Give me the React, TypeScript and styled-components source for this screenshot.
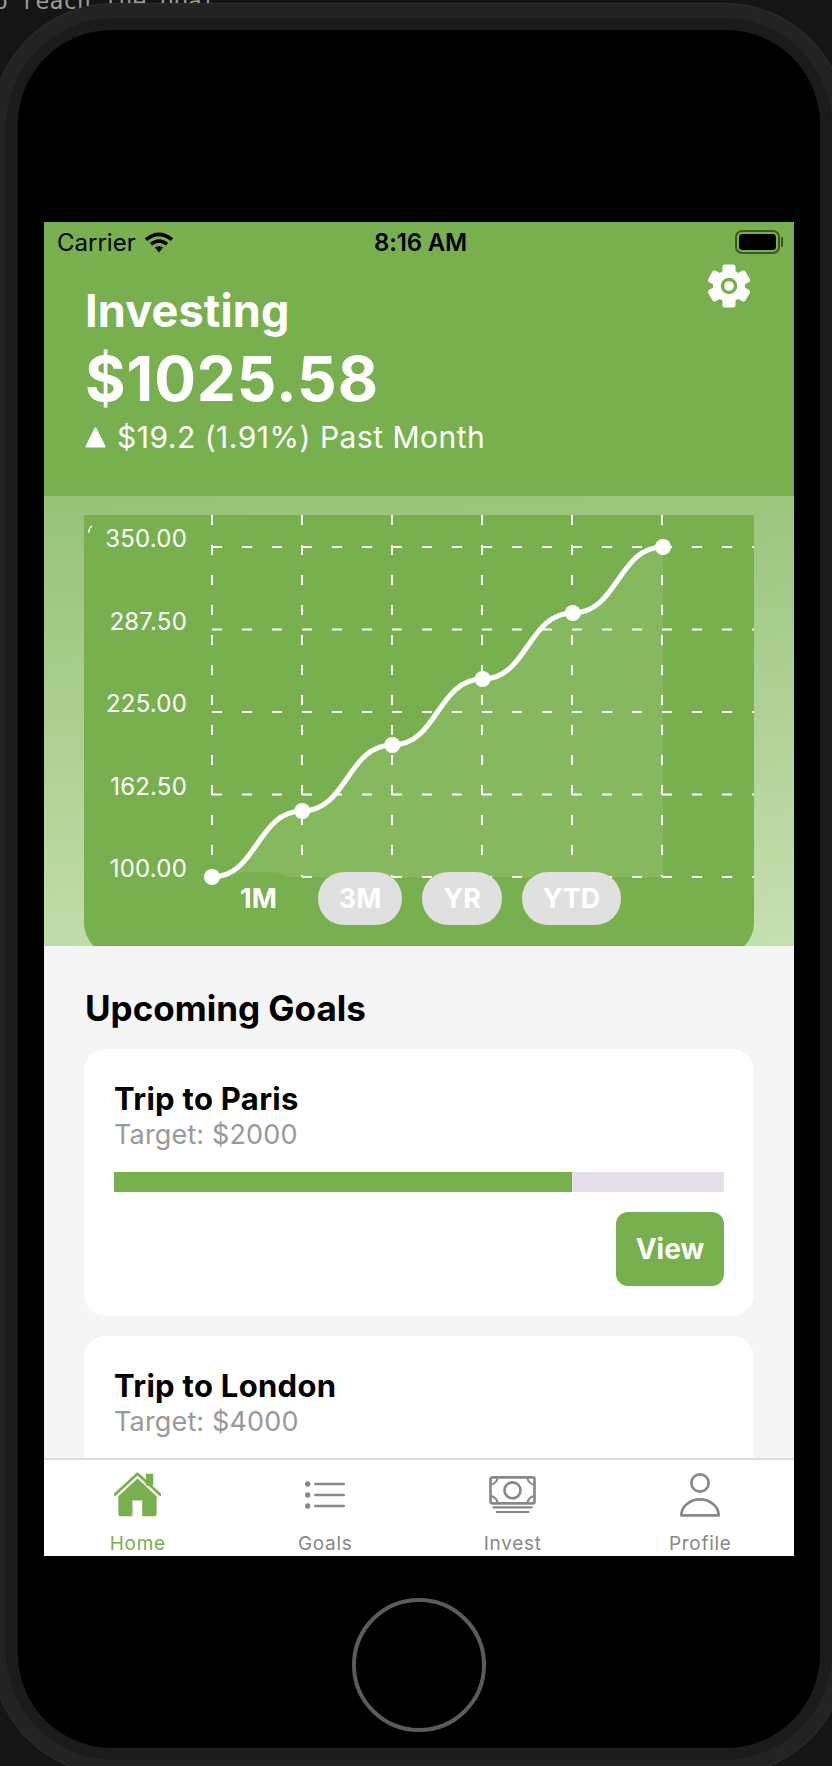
import React from "react";
import styled, { createGlobalStyle } from "styled-components";

const GREEN = "#79b04f";
const SANS = `Inter, "Noto Sans", "Liberation Sans", sans-serif`;

const GlobalStyle = createGlobalStyle`
  html, body {
    margin: 0;
    padding: 0;
    background: #151515;
  }
`;

const Desktop = styled.div`
  position: relative;
  width: 832px;
  height: 1766px;
  overflow: hidden;
  background: #151515;
  font-family: ${SANS};
`;

const TerminalLine = styled.div`
  position: absolute;
  top: -12px;
  left: -6px;
  font: 23px/26px "DejaVu Sans Mono", monospace;
  color: #9c9c9c;
  white-space: pre;
`;

const PhoneShell = styled.div`
  position: relative;
  width: 826px;
  margin: 4px 0 0 -8px;
  padding: 14px;
  background: #232323;
  border-radius: 122px;
  box-shadow: 0 0 0 1px #2e2e2e;
`;

const PhoneBezel = styled.div`
  padding: 12px;
  background: #1b1b1b;
  border-radius: 108px;
`;

const PhoneFace = styled.div`
  display: flex;
  flex-direction: column;
  align-items: center;
  padding: 192px 26px 16px;
  background: #000;
  border-radius: 94px;
`;

const HomeButton = styled.div`
  box-sizing: border-box;
  width: 134px;
  height: 134px;
  margin-top: 42px;
  border: 4px solid #5b5b5b;
  border-radius: 50%;
`;

const Screen = styled.div`
  display: flex;
  flex-direction: column;
  width: 750px;
  height: 1334px;
  overflow: hidden;
  background: #f5f5f5;
`;

const Header = styled.header`
  flex: none;
  height: 274px;
  background: ${GREEN};
`;

const StatusBar = styled.div`
  display: grid;
  grid-template-columns: 1fr auto 1fr;
  align-items: center;
  height: 40px;
  padding: 0 10px 0 13px;
  font-size: 24px;
  color: #000;
`;

const StatusLeft = styled.div`
  display: flex;
  align-items: center;
  gap: 8px;
`;

const StatusTime = styled.div`
  font-weight: 600;
  letter-spacing: -0.2px;
`;

const StatusRight = styled.div`
  display: flex;
  justify-content: flex-end;
`;

const Summary = styled.div`
  display: flex;
  justify-content: space-between;
  align-items: flex-start;
  padding: 22px 40px 0 41px;
`;

const Title = styled.div`
  font-size: 45px;
  line-height: 54px;
  font-weight: 700;
  letter-spacing: 0.15px;
  color: #fff;
`;

const Amount = styled.div`
  margin-top: 4px;
  font-size: 62px;
  line-height: 74px;
  font-weight: 700;
  letter-spacing: 0.9px;
  color: #fff;
`;

const Change = styled.div`
  display: flex;
  align-items: center;
  gap: 11px;
  margin-top: 3px;
  font-size: 30px;
  line-height: 36px;
  letter-spacing: 0.5px;
  color: #fff;
`;

const SettingsIcon = styled.svg`
  width: 44px;
  height: 44px;
  margin: -20px 3px 0 0;
`;

const ChartSection = styled.section`
  flex: none;
  height: 450px;
  box-sizing: border-box;
  padding: 19px 40px 0;
  overflow: hidden;
  background: linear-gradient(176deg, #97c277 0%, #c6dfb1 100%);
`;

const ChartCard = styled.div`
  position: relative;
  height: 440px;
  background: ${GREEN};
  border-radius: 0 0 32px 32px;
`;

const ChartSvg = styled.svg`
  display: block;
  width: 670px;
  height: 440px;
`;

const AxisLabel = styled.text`
  font-family: ${SANS};
  font-size: 24px;
  letter-spacing: 0.2px;
  fill: #fff;
  text-anchor: end;
`;

const RangeRow = styled.div`
  position: absolute;
  top: 357px;
  left: 135px;
  display: flex;
  gap: 20px;
`;

const RangePill = styled.div<{ $active?: boolean }>`
  height: 53px;
  padding: 0 21px;
  border-radius: 26px;
  font-size: 27px;
  line-height: 53px;
  font-weight: 700;
  color: #fff;
  background: ${(p) => (p.$active ? GREEN : "#e0e0e0")};
`;

const Goals = styled.section`
  flex: 1;
  min-height: 0;
  overflow: hidden;
  padding: 40px 40px 0;
`;

const SectionTitle = styled.h2`
  margin: 0 0 19px;
  padding-left: 1px;
  font-size: 35px;
  line-height: 44px;
  font-weight: 700;
  color: #000;
`;

const GoalCard = styled.article`
  display: flex;
  flex-direction: column;
  padding: 32px 30px 30px;
  margin-bottom: 20px;
  background: #fff;
  border-radius: 22px;
`;

const GoalName = styled.div`
  font-size: 31px;
  line-height: 36px;
  font-weight: 700;
  letter-spacing: 0.3px;
  color: #000;
`;

const GoalTarget = styled.div`
  margin-top: 1px;
  font-size: 27px;
  line-height: 34px;
  letter-spacing: 0.15px;
  color: #999;
`;

const ProgressTrack = styled.div`
  height: 20px;
  margin-top: 20px;
  background: #e4dfeb;
`;

const ProgressFill = styled.div`
  height: 100%;
  background: ${GREEN};
`;

const ViewButton = styled.div`
  align-self: flex-end;
  width: 108px;
  height: 74px;
  margin-top: 20px;
  border-radius: 12px;
  background: ${GREEN};
  font-size: 28px;
  line-height: 74px;
  font-weight: 700;
  text-align: center;
  color: #fff;
`;

const TabBar = styled.nav`
  flex: none;
  display: flex;
  box-sizing: border-box;
  height: 98px;
  background: #fff;
  border-top: 2px solid #dcdcdc;
`;

const TabItem = styled.div<{ $active?: boolean }>`
  flex: 1;
  display: flex;
  flex-direction: column;
  align-items: center;
  color: ${(p) => (p.$active ? GREEN : "#888")};
`;

const TabIconBox = styled.div`
  display: flex;
  align-items: center;
  justify-content: center;
  height: 46px;
  margin-top: 12px;
`;

const TabLabel = styled.div`
  margin-top: 15px;
  font-size: 19px;
  line-height: 24px;
  letter-spacing: 0.7px;
`;

const Wifi = () => (
  <svg width="30" height="21" viewBox="0 0 30 21">
    <path d="M2 7.6Q15 -3 28 7.6" fill="none" stroke="#000" strokeWidth="3.6" />
    <path d="M7 12.2Q15 5.6 23 12.2" fill="none" stroke="#000" strokeWidth="3.4" />
    <path d="M11 15.6Q15 12.8 19 15.6L15 20.6Z" fill="#000" />
  </svg>
);

const Battery = () => (
  <svg width="49" height="24" viewBox="0 0 49 24">
    <rect x="1" y="1" width="43" height="22" rx="6" fill="none" stroke="#000" strokeOpacity="0.5" strokeWidth="2" />
    <rect x="4" y="4" width="37" height="16" rx="3.5" fill="#000" />
    <rect x="46" y="7" width="2" height="10" rx="1" fill="#000" fillOpacity="0.5" />
  </svg>
);

const Gear = () => (
  <SettingsIcon viewBox="-22 -22 44 44">
    <circle r="16" fill="#fff" />
    {[0, 60, 120, 180, 240, 300].map((a) => (
      <rect key={a} x="-6.5" y="-21.5" width="13" height="10" rx="2.5" fill="#fff" transform={`rotate(${a})`} />
    ))}
    <circle r="8.3" fill={GREEN} />
    <circle r="4.8" fill="#fff" />
  </SettingsIcon>
);

const UpTriangle = () => (
  <svg width="21" height="21" viewBox="0 0 21 21">
    <path d="M10.5 1.5L19.5 19.5H1.5Z" fill="#fff" stroke="#fff" strokeWidth="2" strokeLinejoin="round" />
  </svg>
);

const HomeIcon = () => (
  <svg width="47" height="45" viewBox="0 0 140 134" fill="currentColor">
    <rect x="95" y="5" width="22" height="36" rx="2" />
    <path d="M3 67L70 5L137 67" fill="none" stroke="currentColor" strokeWidth="8" strokeLinecap="round" strokeLinejoin="round" />
    <path d="M70 19L127 72V126Q127 132 121 132H84V85H55V132H19Q13 132 13 126V72Z" />
  </svg>
);

const GoalsIcon = () => (
  <svg width="40" height="28" viewBox="0 0 120 82" fill="currentColor" stroke="currentColor">
    <circle cx="8" cy="8" r="8" stroke="none" />
    <circle cx="8" cy="41" r="8" stroke="none" />
    <circle cx="8" cy="74" r="8" stroke="none" />
    <path d="M31 8H116M31 41H116M31 74H116" fill="none" strokeWidth="8" strokeLinecap="round" />
  </svg>
);

const InvestIcon = () => (
  <svg width="47" height="38" viewBox="0 0 140 114" fill="none" stroke="currentColor" strokeWidth="8">
    <rect x="4" y="4" width="132" height="78" rx="5" />
    <circle cx="70" cy="43" r="24" />
    <path d="M4 26Q22 24 26 4M136 26Q118 24 114 4M4 60Q22 62 26 82M136 60Q118 62 114 82" strokeWidth="6" />
    <path d="M10 94H130" strokeWidth="7" />
    <path d="M20 108H120" strokeWidth="6" />
  </svg>
);

const ProfileIcon = () => (
  <svg width="40" height="44" viewBox="0 0 120 132" fill="none" stroke="currentColor" strokeWidth="8" strokeLinejoin="round">
    <circle cx="60" cy="30" r="26" />
    <path d="M4 127H116C116 100 90 79 60 79C30 79 4 100 4 127Z" />
  </svg>
);

const yLabels = ["350.00", "287.50", "225.00", "162.50", "100.00"];
const gridX = [128, 218, 308, 398, 488, 578];
const points = gridX.map((x, i) => ({ x: x + 0.2 * i, y: 362 - 66 * i }));

const curve = points.reduce((d, p, i) => {
  if (i === 0) return `M${p.x} ${p.y}`;
  const prev = points[i - 1];
  const mid = (prev.x + p.x) / 2;
  return `${d}C${mid} ${prev.y} ${mid} ${p.y} ${p.x} ${p.y}`;
}, "");

const Chart = () => (
  <ChartSvg viewBox="0 0 670 440">
    <path d={`${curve}V362H128Z`} fill="#fff" fillOpacity="0.1" />
    <path d="M4.5 18Q5 13 8 11" fill="none" stroke="#fff" strokeWidth="1.5" />
    {gridX.map((x) => (
      <line key={x} x1={x} y1="0" x2={x} y2="362" stroke="#fff" strokeWidth="2" strokeDasharray="10 20" />
    ))}
    {yLabels.map((label, i) => {
      const y = 32 + 82.5 * i;
      return (
        <g key={label}>
          <line x1="128" y1={y} x2="670" y2={y} stroke="#fff" strokeWidth="2" strokeDasharray="10 20" />
          <AxisLabel x="103" y={y}>{label}</AxisLabel>
        </g>
      );
    })}
    <path d={curve} fill="none" stroke="#fff" strokeWidth="5" />
    {points.map((p) => (
      <circle key={p.x} cx={p.x} cy={p.y} r="8" fill="#fff" />
    ))}
  </ChartSvg>
);

const goals = [
  { name: "Trip to Paris", target: "Target: $2000", progress: 75 },
  { name: "Trip to London", target: "Target: $4000", progress: 40 },
];

const tabs = [
  { label: "Home", icon: <HomeIcon />, active: true },
  { label: "Goals", icon: <GoalsIcon /> },
  { label: "Invest", icon: <InvestIcon /> },
  { label: "Profile", icon: <ProfileIcon /> },
];

const App = () => {
  return (
    <Desktop>
      <GlobalStyle />
      <TerminalLine>o reach the goal</TerminalLine>
      <PhoneShell>
        <PhoneBezel>
          <PhoneFace>
            <Screen>
              <Header>
                <StatusBar>
                  <StatusLeft>
                    <span>Carrier</span>
                    <Wifi />
                  </StatusLeft>
                  <StatusTime>8:16 AM</StatusTime>
                  <StatusRight>
                    <Battery />
                  </StatusRight>
                </StatusBar>
                <Summary>
                  <div>
                    <Title>Investing</Title>
                    <Amount>$1025.58</Amount>
                    <Change>
                      <UpTriangle />
                      <span>$19.2 (1.91%) Past Month</span>
                    </Change>
                  </div>
                  <Gear />
                </Summary>
              </Header>

              <ChartSection>
                <ChartCard>
                  <Chart />
                  <RangeRow>
                    <RangePill $active>1M</RangePill>
                    <RangePill>3M</RangePill>
                    <RangePill>YR</RangePill>
                    <RangePill>YTD</RangePill>
                  </RangeRow>
                </ChartCard>
              </ChartSection>

              <Goals>
                <SectionTitle>Upcoming Goals</SectionTitle>
                {goals.map((goal) => (
                  <GoalCard key={goal.name}>
                    <GoalName>{goal.name}</GoalName>
                    <GoalTarget>{goal.target}</GoalTarget>
                    <ProgressTrack>
                      <ProgressFill style={{ width: `${goal.progress}%` }} />
                    </ProgressTrack>
                    <ViewButton>View</ViewButton>
                  </GoalCard>
                ))}
              </Goals>

              <TabBar>
                {tabs.map((tab) => (
                  <TabItem key={tab.label} $active={tab.active}>
                    <TabIconBox>{tab.icon}</TabIconBox>
                    <TabLabel>{tab.label}</TabLabel>
                  </TabItem>
                ))}
              </TabBar>
            </Screen>
            <HomeButton />
          </PhoneFace>
        </PhoneBezel>
      </PhoneShell>
    </Desktop>
  );
};

export default App;
